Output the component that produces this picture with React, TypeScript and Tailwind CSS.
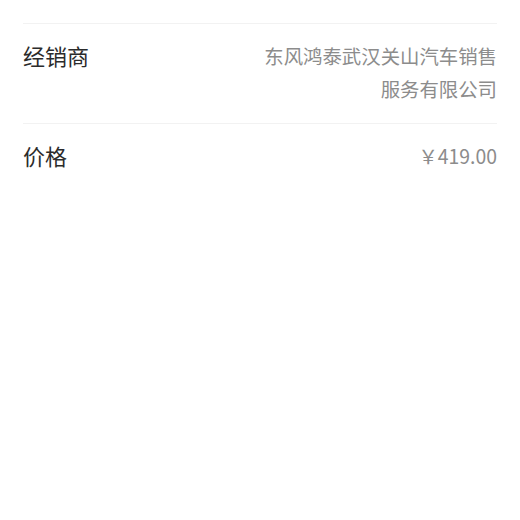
const rows = [
  { label: "经销商", value: "东风鸿泰武汉关山汽车销售服务有限公司" },
  { label: "价格", value: "￥419.00" },
];

const App = () => {
  return (
    <div className="min-h-[520px] bg-white px-[23px] pt-[23px] font-['Noto_Sans_CJK_SC','Noto_Sans',sans-serif]">
      {rows.map((row) => (
        <div
          key={row.label}
          className="flex items-start justify-between gap-6 border-t border-[#f2f2f2] pt-[15px] pb-[18px]"
        >
          <span className="shrink-0 text-[22px] leading-[33px] text-[#2b2b2b]">{row.label}</span>
          <span className="w-[233px] text-right text-[19.4px] leading-[33px] text-[#8c8c8c]">
            {row.value}
          </span>
        </div>
      ))}
    </div>
  );
};

export default App;
